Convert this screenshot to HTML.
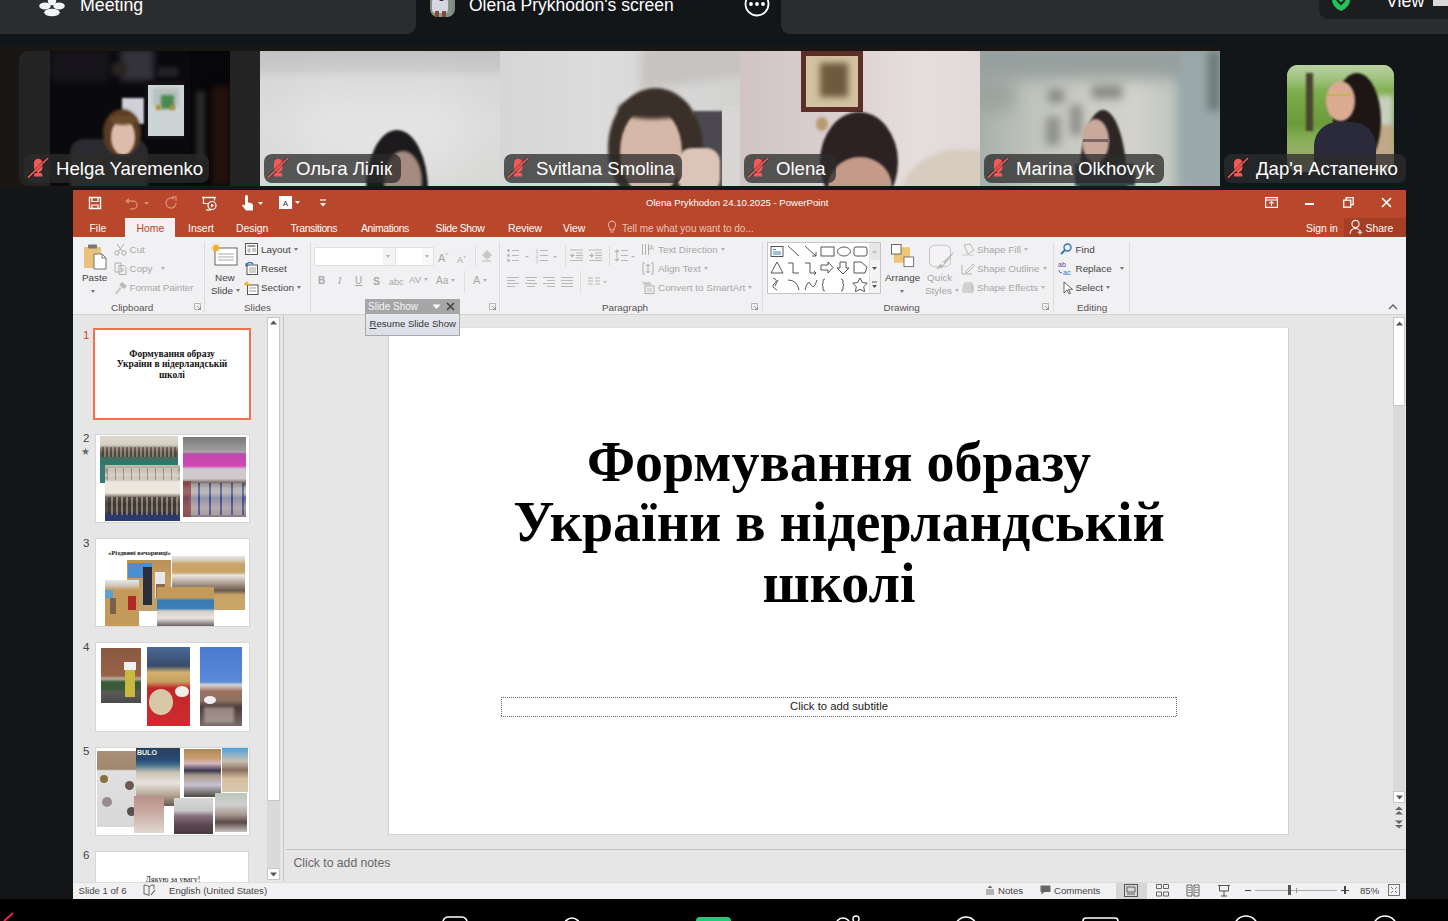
<!DOCTYPE html>
<html><head><meta charset="utf-8">
<style>
*{margin:0;padding:0;box-sizing:border-box}
html,body{width:1448px;height:921px;overflow:hidden;background:#131619;font-family:"Liberation Sans",sans-serif;position:relative}
.a{position:absolute}
.t{position:absolute;white-space:nowrap}
#topL{left:0;top:0;width:416px;height:34px;background:#2b2c2e;border-bottom-right-radius:9px}
#topR{left:781px;top:0;width:667px;height:34px;background:#2b2c2e;border-bottom-left-radius:9px}
.tile{position:absolute;top:51px;height:135px;overflow:hidden}
.lbl{position:absolute;top:154px;height:29px;border-radius:8px;background:rgba(43,43,43,.76);color:#fff;font-size:18.6px;line-height:29px}
.lbl span{position:absolute;left:32px;top:0}
.lbl svg{position:absolute;left:3px;top:3px}
.blob{position:absolute;border-radius:50%}
</style></head><body>
<div class="a" id="topL"></div>
<div class="a" id="topR"></div>
<!-- meeting icon -->
<svg class="a" style="left:39px;top:-4px" width="26" height="22" viewBox="0 0 26 22">
  <ellipse cx="13" cy="5" rx="4.2" ry="4.2" fill="#f4f5f7"/>
  <ellipse cx="6" cy="10" rx="5.8" ry="3.4" fill="#f4f5f7"/>
  <ellipse cx="20" cy="10" rx="5.8" ry="3.4" fill="#f4f5f7"/>
  <ellipse cx="13" cy="16.5" rx="7.8" ry="3.8" fill="#f4f5f7"/>
  
</svg>
<div class="t" style="left:80px;top:-5.5px;font-size:17.8px;color:#fff;line-height:21px">Meeting</div>
<!-- sharer avatar -->
<div class="a" style="left:430px;top:-8px;width:25px;height:25px;border-radius:8px;overflow:hidden;background:linear-gradient(90deg,#8a857e 0%,#9a9890 40%,#8a968c 70%,#7a8680 100%)">
  <div class="a" style="left:2px;top:6px;width:16px;height:15px;border-radius:4px;background:#d6d6e2;filter:blur(.4px)"></div>
  <div class="blob" style="left:7px;top:-3px;width:9px;height:12px;background:#241a16"></div>
  <div class="a" style="left:5px;top:19px;width:4px;height:6px;background:#7a5038"></div>
  <div class="a" style="left:12px;top:19px;width:4px;height:6px;background:#7a5038"></div>
</div>
<div class="t" style="left:469px;top:-5.5px;font-size:17.5px;color:#fff;line-height:21px">Olena Prykhodon's screen</div>
<!-- more circle -->
<svg class="a" style="left:744px;top:-9px" width="26" height="26" viewBox="0 0 26 26">
  <circle cx="13" cy="13" r="11.5" fill="none" stroke="#fff" stroke-width="1.8"/>
  <circle cx="7" cy="13" r="1.9" fill="#fff"/><circle cx="13" cy="13" r="1.9" fill="#fff"/><circle cx="19" cy="13" r="1.9" fill="#fff"/>
</svg>
<!-- right view panel -->
<div class="a" style="left:1319px;top:0;width:140px;height:19px;background:#1c1d1f;border-bottom-left-radius:9px"></div>
<svg class="a" style="left:1330px;top:-4px" width="22" height="16" viewBox="0 0 22 16">
  <path d="M2 0 L20 0 L20 4 Q20 11 11 15 Q2 11 2 4 Z" fill="#25c255"/>
  <path d="M7 4 L11 8 L15 4" stroke="#1c1d1f" stroke-width="2" fill="none"/>
</svg>
<div class="t" style="left:1386px;top:-9px;font-size:17.8px;color:#fff;line-height:21px">View</div>
<div class="a" style="left:1433px;top:0;width:15px;height:6px;background:#d8d8d8"></div>

<!-- strip -->
<div class="a" style="left:0;top:46px;width:1448px;height:142px;background:#1a1613"></div>
<div class="a" style="left:1220px;top:47px;width:228px;height:140px;background:#131619"></div>

<!-- tile1 Helga -->
<div class="tile" style="left:19px;width:241px;background:#232323;border-radius:9px 0 0 9px"></div>
<div class="tile" style="left:50px;width:180px;background:#0a090d">
  <div class="a" style="left:0;top:0;width:60px;height:30px;background:#18161c;filter:blur(4px)"></div>
  <div class="a" style="left:70px;top:-2px;width:34px;height:32px;background:#34323a;filter:blur(3px)"></div>
  <div class="a" style="left:62px;top:12px;width:14px;height:12px;background:#2a2420;filter:blur(2px)"></div>
  <div class="a" style="left:108px;top:16px;width:20px;height:10px;background:#242228;filter:blur(2px)"></div>
  <div class="a" style="left:72px;top:47px;width:22px;height:26px;background:#cfd0d8;filter:blur(1px)"></div>
  <div class="a" style="left:95px;top:30px;width:40px;height:58px;background:#141216;filter:blur(1px)"></div>
  <div class="a" style="left:98px;top:34px;width:36px;height:51px;background:#cdd4d4;filter:blur(.5px)"></div>
  <div class="a" style="left:103px;top:37px;width:26px;height:18px;background:#b8c0c0;filter:blur(1.5px)"></div>
  <div class="a" style="left:111px;top:44px;width:13px;height:14px;background:#4a8a50;filter:blur(1.5px)"></div>
  <div class="a" style="left:106px;top:54px;width:5px;height:5px;background:#b09040;filter:blur(1px)"></div>
  <div class="a" style="left:120px;top:54px;width:5px;height:5px;background:#b09040;filter:blur(1px)"></div>
  <div class="a" style="left:140px;top:0;width:40px;height:135px;background:#070608"></div>
  <div class="a" style="left:146px;top:40px;width:9px;height:70px;background:#2c2a2c;filter:blur(2.5px)"></div>
  <div class="a" style="left:162px;top:35px;width:18px;height:100px;background:#24120e;filter:blur(3px)"></div>
  <div class="a" style="left:20px;top:88px;width:78px;height:50px;border-radius:14px 14px 0 0;background:#2a2a30;filter:blur(1px)"></div>
  <div class="blob" style="left:53px;top:58px;width:38px;height:48px;background:#5a3c24;filter:blur(1.5px)"></div>
  <div class="blob" style="left:61px;top:68px;width:24px;height:36px;background:#dcbcaa;filter:blur(1px)"></div>
  <div class="a" style="left:60px;top:64px;width:26px;height:10px;border-radius:50%;background:#6a4a2c;filter:blur(1.5px)"></div>
</div>
<!-- tile2 Olga -->
<div class="tile" style="left:260px;width:240px;background:linear-gradient(180deg,#c2c2c4 0%,#cbcbcc 14%,#d8d8d8 20%,#dedddd 55%,#d8d8d6 100%)">
  <div class="a" style="left:40px;top:40px;width:160px;height:80px;background:#e4e3e3;filter:blur(20px)"></div>
  <div class="blob" style="left:106px;top:79px;width:62px;height:120px;background:#1c1a1c;filter:blur(1px)"></div>
  <div class="blob" style="left:124px;top:100px;width:38px;height:60px;background:#a68c80;filter:blur(1.5px)"></div>
</div>
<!-- tile3 Svitlana -->
<div class="tile" style="left:500px;width:240px;background:linear-gradient(90deg,#d6d6d6 0%,#dcdcdc 40%,#d8d8d8 70%,#d2d2d0 100%)">
  <div class="a" style="left:140px;top:-10px;width:110px;height:42px;background:#c6c4c2;filter:blur(5px);transform:skewY(-8deg)"></div>
  <div class="a" style="left:193px;top:60px;width:30px;height:80px;background:#4c4a50;filter:blur(1px)"></div>
  <div class="a" style="left:222px;top:55px;width:18px;height:80px;background:#d8d6d4"></div>
  <div class="blob" style="left:108px;top:37px;width:95px;height:120px;background:#3a3029;filter:blur(1.5px)"></div>
  <div class="blob" style="left:120px;top:56px;width:62px;height:90px;background:#d6b8a8;filter:blur(1px)"></div>
  <div class="a" style="left:118px;top:48px;width:70px;height:20px;border-radius:50%;background:#3a3029;filter:blur(2px)"></div>
  <div class="a" style="left:178px;top:97px;width:42px;height:45px;border-radius:14px;background:#dcc4b6;filter:blur(1px)"></div>
</div>
<!-- tile4 Olena -->
<div class="tile" style="left:740px;width:240px;background:linear-gradient(90deg,#d0c4c4 0%,#dbd0d0 40%,#e6dede 75%,#e2dad8 100%)">
  <div class="a" style="left:61px;top:0;width:62px;height:61px;background:#5c2e26"></div>
  <div class="a" style="left:66px;top:5px;width:52px;height:51px;background:#d2c2a2"></div>
  <div class="a" style="left:80px;top:12px;width:28px;height:34px;background:#6e5a3c;filter:blur(3px)"></div>
  <div class="blob" style="left:76px;top:66px;width:12px;height:14px;background:#b89a70;filter:blur(1.5px)"></div>
  <div class="blob" style="left:80px;top:61px;width:78px;height:100px;background:#2c2224;filter:blur(1px)"></div>
  <div class="blob" style="left:88px;top:106px;width:64px;height:60px;background:#c49a88;filter:blur(1px)"></div>
  <div class="blob" style="left:162px;top:98px;width:120px;height:90px;background:#d8ccc0;filter:blur(2px)"></div>
  </div>
<!-- tile5 Marina -->
<div class="tile" style="left:980px;width:240px;background:linear-gradient(90deg,#a8b0ac 0%,#bfc4bc 22%,#cccdc4 45%,#d2d2ca 65%,#c4c8c2 78%,#a8b4b4 84%,#9aa8a8 100%)">
  <div class="a" style="left:-10px;top:-10px;width:260px;height:38px;background:#96a09e;filter:blur(8px)"></div>
  <div class="a" style="left:-5px;top:30px;width:40px;height:30px;background:#8e9894;filter:blur(8px);opacity:.6"></div>
  <div class="a" style="left:68px;top:38px;width:16px;height:14px;background:#8a8c86;filter:blur(4px)"></div>
  <div class="a" style="left:112px;top:34px;width:30px;height:14px;background:#8a8c86;filter:blur(4px)"></div>
  <div class="a" style="left:66px;top:66px;width:14px;height:28px;background:#8e908a;filter:blur(4px)"></div>
  <div class="a" style="left:90px;top:54px;width:12px;height:30px;background:#8e908a;filter:blur(4px)"></div>
  <div class="a" style="left:200px;top:0;width:40px;height:135px;background:#9aa8aa;filter:blur(3px)"></div>
  <div class="a" style="left:228px;top:0;width:12px;height:60px;background:#6a7876;filter:blur(4px)"></div>
  <div class="blob" style="left:99px;top:59px;width:48px;height:150px;background:#2e2624;filter:blur(1px)"></div>
  <div class="blob" style="left:102px;top:68px;width:27px;height:44px;background:#caa89c;filter:blur(1px)"></div>
  <div class="a" style="left:103px;top:88px;width:25px;height:3px;background:#3a3034;opacity:.55"></div>
  <div class="a" style="left:95px;top:113px;width:60px;height:22px;background:#40404a;filter:blur(1px)"></div>
</div>
<!-- tile6 avatar -->
<div class="a" style="left:1287px;top:65px;width:107px;height:107px;border-radius:11px;overflow:hidden;background:linear-gradient(180deg,#98c078 0%,#7aaa48 30%,#6a9a3a 55%,#88b058 70%,#a8a880 100%)">
  <div class="a" style="left:0;top:0;width:107px;height:25px;background:linear-gradient(180deg,#b8d0a0,rgba(150,190,110,0))"></div>
  <div class="a" style="left:19px;top:8px;width:7px;height:58px;background:#4a4430;filter:blur(1px)"></div>
  <div class="a" style="left:88px;top:30px;width:19px;height:35px;background:#c8d0c0;filter:blur(3px)"></div>
  <div class="a" style="left:70px;top:60px;width:37px;height:47px;background:#c0a888;filter:blur(2px)"></div>
  <div class="blob" style="left:46px;top:8px;width:48px;height:95px;background:#1d1614;filter:blur(.8px)"></div>
  <div class="blob" style="left:39px;top:16px;width:29px;height:40px;background:#dcaa92;filter:blur(.8px)"></div>
  <div class="a" style="left:40px;top:29px;width:24px;height:2px;background:#b8b848;opacity:.8"></div>
  <div class="a" style="left:27px;top:57px;width:62px;height:55px;border-radius:24px 24px 0 0;background:#2a2a3a;filter:blur(.5px)"></div>
</div>

<!-- labels -->
<div class="lbl" style="left:24px;width:185px"><svg width="24" height="24" viewBox="0 0 24 24"><rect x="7" y="1.8" width="8.4" height="13.5" rx="4.2" fill="#f25a58"/><rect x="10.5" y="14" width="1.4" height="2" fill="#f25a58"/><path d="M7 19.6 v-1.6 q0-2 2-2 h4.4 q2 0 2 2 v1.6 z" fill="#f25a58"/><path d="M1 20.6 L21 1" stroke="rgba(0,0,0,0.35)" stroke-width="3.4"/><path d="M1 20.6 L21 1" stroke="#f25a58" stroke-width="1.7"/></svg><span>Helga Yaremenko</span></div>
<div class="lbl" style="left:264px;width:137px"><svg width="24" height="24" viewBox="0 0 24 24"><rect x="7" y="1.8" width="8.4" height="13.5" rx="4.2" fill="#f25a58"/><rect x="10.5" y="14" width="1.4" height="2" fill="#f25a58"/><path d="M7 19.6 v-1.6 q0-2 2-2 h4.4 q2 0 2 2 v1.6 z" fill="#f25a58"/><path d="M1 20.6 L21 1" stroke="rgba(0,0,0,0.35)" stroke-width="3.4"/><path d="M1 20.6 L21 1" stroke="#f25a58" stroke-width="1.7"/></svg><span>Ольга Лілік</span></div>
<div class="lbl" style="left:504px;width:178px"><svg width="24" height="24" viewBox="0 0 24 24"><rect x="7" y="1.8" width="8.4" height="13.5" rx="4.2" fill="#f25a58"/><rect x="10.5" y="14" width="1.4" height="2" fill="#f25a58"/><path d="M7 19.6 v-1.6 q0-2 2-2 h4.4 q2 0 2 2 v1.6 z" fill="#f25a58"/><path d="M1 20.6 L21 1" stroke="rgba(0,0,0,0.35)" stroke-width="3.4"/><path d="M1 20.6 L21 1" stroke="#f25a58" stroke-width="1.7"/></svg><span>Svitlana Smolina</span></div>
<div class="lbl" style="left:744px;width:92px"><svg width="24" height="24" viewBox="0 0 24 24"><rect x="7" y="1.8" width="8.4" height="13.5" rx="4.2" fill="#f25a58"/><rect x="10.5" y="14" width="1.4" height="2" fill="#f25a58"/><path d="M7 19.6 v-1.6 q0-2 2-2 h4.4 q2 0 2 2 v1.6 z" fill="#f25a58"/><path d="M1 20.6 L21 1" stroke="rgba(0,0,0,0.35)" stroke-width="3.4"/><path d="M1 20.6 L21 1" stroke="#f25a58" stroke-width="1.7"/></svg><span>Olena</span></div>
<div class="lbl" style="left:984px;width:180px"><svg width="24" height="24" viewBox="0 0 24 24"><rect x="7" y="1.8" width="8.4" height="13.5" rx="4.2" fill="#f25a58"/><rect x="10.5" y="14" width="1.4" height="2" fill="#f25a58"/><path d="M7 19.6 v-1.6 q0-2 2-2 h4.4 q2 0 2 2 v1.6 z" fill="#f25a58"/><path d="M1 20.6 L21 1" stroke="rgba(0,0,0,0.35)" stroke-width="3.4"/><path d="M1 20.6 L21 1" stroke="#f25a58" stroke-width="1.7"/></svg><span>Marina Olkhovyk</span></div>
<div class="lbl" style="left:1224px;width:182px"><svg width="24" height="24" viewBox="0 0 24 24"><rect x="7" y="1.8" width="8.4" height="13.5" rx="4.2" fill="#f25a58"/><rect x="10.5" y="14" width="1.4" height="2" fill="#f25a58"/><path d="M7 19.6 v-1.6 q0-2 2-2 h4.4 q2 0 2 2 v1.6 z" fill="#f25a58"/><path d="M1 20.6 L21 1" stroke="rgba(0,0,0,0.35)" stroke-width="3.4"/><path d="M1 20.6 L21 1" stroke="#f25a58" stroke-width="1.7"/></svg><span>Дар'я Астапенко</span></div>

<!-- PPT -->
<div class="a" style="left:73px;top:190px;width:1333px;height:709px;background:#e6e6e6"></div>
<div class="a" style="left:73px;top:190px;width:1333px;height:47px;background:#b8472b"></div>
<!-- QAT -->
<svg class="a" style="left:88px;top:196px" width="14" height="14" viewBox="0 0 14 14"><path d="M1.5 1.5 h11 v11 h-11 z" fill="none" stroke="#fff" stroke-width="1.4"/><path d="M4 1.5 v4 h6 v-4" fill="none" stroke="#fff" stroke-width="1.2"/><path d="M4 12.5 v-3.5 h6 v3.5" fill="none" stroke="#fff" stroke-width="1.2"/></svg>
<svg class="a" style="left:124px;top:196px" width="26" height="14" viewBox="0 0 26 14"><path d="M3 5 h6 a4 4 0 0 1 0 8 h-3" fill="none" stroke="#d98a74" stroke-width="1.4"/><path d="M1 5 l4 -3 v6 z" fill="#d98a74"/><path d="M20 6 l2.5 3 l2.5 -3 z" fill="#d98a74"/></svg>
<svg class="a" style="left:164px;top:196px" width="14" height="14" viewBox="0 0 14 14"><path d="M10 3 a5 5 0 1 0 2 4" fill="none" stroke="#d98a74" stroke-width="1.4"/><path d="M8 1 h4 v4" fill="none" stroke="#d98a74" stroke-width="1.3"/></svg>
<svg class="a" style="left:201px;top:196px" width="16" height="15" viewBox="0 0 16 15"><path d="M1 1.5 h14" stroke="#fff" stroke-width="1.4"/><path d="M2.5 1.5 v6 h5" fill="none" stroke="#fff" stroke-width="1.2"/><path d="M13.5 1.5 v3" stroke="#fff" stroke-width="1.2"/><circle cx="11" cy="9.5" r="4" fill="none" stroke="#fff" stroke-width="1.2"/><path d="M10 7.5 l3 2 l-3 2 z" fill="#fff"/><path d="M5 14 h5" stroke="#fff" stroke-width="1.2"/></svg>
<svg class="a" style="left:240px;top:195px" width="26" height="16" viewBox="0 0 26 16"><path d="M5 1.5 a1.5 1.5 0 0 1 3 0 v6 l3 0.5 q2 0.5 2 2.5 v5 h-7 l-4 -5 l1 -1 l2 1 z" fill="#fff"/><path d="M18 7 l2.5 3 l2.5 -3 z" fill="#fff"/></svg>
<svg class="a" style="left:278px;top:195px" width="26" height="15" viewBox="0 0 26 15"><rect x="1" y="1" width="13" height="13" fill="#fff"/><text x="7.5" y="10.5" font-size="8" font-family="Liberation Sans" text-anchor="middle" fill="#333">A</text><path d="M17 6 l2.5 3 l2.5 -3 z" fill="#fff"/></svg>
<svg class="a" style="left:318px;top:198px" width="10" height="10" viewBox="0 0 10 10"><path d="M2 2 h6" stroke="#fff" stroke-width="1.2"/><path d="M2 5 l3 3.5 l3 -3.5 z" fill="#fff"/></svg>
<div class="t" style="left:646px;top:197px;font-size:9.6px;line-height:12px;color:#fff">Olena Prykhodon 24.10.2025 - PowerPoint</div>
<!-- window controls -->
<svg class="a" style="left:1265px;top:197px" width="13" height="11" viewBox="0 0 13 11"><rect x="0.6" y="0.6" width="11.8" height="9.8" fill="none" stroke="#fff" stroke-width="1.2"/><path d="M0.6 3 h11.8" stroke="#fff" stroke-width="1.1"/><path d="M6.5 9 v-4.5 M4.5 6.5 l2 -2 l2 2" fill="none" stroke="#fff" stroke-width="1.1"/></svg>
<div class="a" style="left:1305px;top:203px;width:9px;height:2px;background:#fff"></div>
<svg class="a" style="left:1343px;top:197px" width="11" height="11" viewBox="0 0 11 11"><rect x="0.7" y="3.2" width="7" height="7" fill="none" stroke="#fff" stroke-width="1.3"/><path d="M3.2 3.2 v-2.5 h7 v7 h-2.5" fill="none" stroke="#fff" stroke-width="1.3"/></svg>
<svg class="a" style="left:1381px;top:197px" width="11" height="11" viewBox="0 0 11 11"><path d="M1 1 L10 10 M10 1 L1 10" stroke="#fff" stroke-width="1.6"/></svg>
<!-- tabs -->
<div class="a" style="left:125px;top:218px;width:50px;height:20px;background:#f1f0f2"></div>
<div class="t" style="left:89.5px;top:222.5px;font-size:10.4px;line-height:12px;color:#fff">File</div>
<div class="t" style="left:136.5px;top:222.5px;font-size:10.4px;line-height:12px;color:#c3401e">Home</div>
<div class="t" style="left:188px;top:222.5px;font-size:10.4px;line-height:12px;color:#fff">Insert</div>
<div class="t" style="left:236px;top:222.5px;font-size:10.4px;line-height:12px;color:#fff">Design</div>
<div class="t" style="left:290.5px;top:222.5px;font-size:10.4px;line-height:12px;color:#fff;letter-spacing:-0.35px">Transitions</div>
<div class="t" style="left:361px;top:222.5px;font-size:10.4px;line-height:12px;color:#fff;letter-spacing:-0.35px">Animations</div>
<div class="t" style="left:435.5px;top:222.5px;font-size:10.4px;line-height:12px;color:#fff;letter-spacing:-0.3px">Slide Show</div>
<div class="t" style="left:508px;top:222.5px;font-size:10.4px;line-height:12px;color:#fff">Review</div>
<div class="t" style="left:563px;top:222.5px;font-size:10.4px;line-height:12px;color:#fff">View</div>
<svg class="a" style="left:607px;top:220px" width="10" height="14" viewBox="0 0 10 14"><path d="M5 1 a3.8 3.8 0 0 0 -2.2 6.8 v2.2 h4.4 v-2.2 a3.8 3.8 0 0 0 -2.2 -6.8 z" fill="none" stroke="#e8c0b0" stroke-width="1"/><path d="M3.3 12 h3.4" stroke="#e8c0b0" stroke-width="1"/></svg>
<div class="t" style="left:622px;top:222.5px;font-size:10px;line-height:12px;color:#ecc2b4">Tell me what you want to do...</div>
<div class="t" style="left:1306px;top:222.5px;font-size:10.4px;line-height:12px;color:#fff">Sign in</div>
<div class="a" style="left:1344px;top:218px;width:62px;height:19px;background:#a43e25"></div>
<svg class="a" style="left:1349px;top:219px" width="15" height="16" viewBox="0 0 15 16"><circle cx="6.5" cy="5" r="3.6" fill="none" stroke="#fff" stroke-width="1.1"/><path d="M1 15 q0.5 -5.5 5.5 -5.5 q2.5 0 3.8 1.5" fill="none" stroke="#fff" stroke-width="1.1"/><path d="M11 11 v4.5 M8.8 13.2 h4.5" stroke="#fff" stroke-width="1.1"/></svg>
<div class="t" style="left:1365.5px;top:222.5px;font-size:10.4px;line-height:12px;color:#fff">Share</div>
<!-- ribbon -->
<div class="a" style="left:73px;top:237px;width:1333px;height:78px;background:#f1f0f2;border-bottom:1px solid #d2d2d2"></div>
<style>
.r{position:absolute;white-space:nowrap;font-size:9.9px;line-height:12px;color:#444}
.d{color:#a8a8a8}
.gl{position:absolute;white-space:nowrap;font-size:9.9px;line-height:12px;color:#555}
.sep{position:absolute;top:242px;width:1px;height:70px;background:#dcdcdc}
.dd{display:inline-block;width:0;height:0;border-left:2.5px solid transparent;border-right:2.5px solid transparent;border-top:3px solid #777;vertical-align:middle;margin-left:3px;position:relative;top:-1px}
.dd.g{border-top-color:#b4b4b4}
</style>
<!-- Clipboard -->
<svg class="a" style="left:83px;top:243px" width="25" height="27" viewBox="0 0 25 27"><rect x="1" y="4" width="17" height="21" rx="1" fill="#e8c27a"/><rect x="5" y="1.5" width="9" height="4" rx="1" fill="#777"/><path d="M11 11 h8 l4 4 v11 h-12 z" fill="#fff" stroke="#666" stroke-width="0.9"/><path d="M19 11 v4 h4" fill="none" stroke="#666" stroke-width="0.9"/></svg>
<div class="r" style="left:82px;top:272px">Paste</div>
<div class="dd" style="position:absolute;left:91px;top:290px;margin:0"></div>
<svg class="a" style="left:114px;top:243px" width="13" height="13" viewBox="0 0 13 13"><circle cx="3" cy="10" r="2.2" fill="none" stroke="#aaa" stroke-width="1"/><circle cx="10" cy="10" r="2.2" fill="none" stroke="#aaa" stroke-width="1"/><path d="M4.5 8.5 L10 1 M8.5 8.5 L3 1" stroke="#aaa" stroke-width="1"/></svg>
<div class="r d" style="left:129.5px;top:244px">Cut</div>
<svg class="a" style="left:114px;top:262px" width="13" height="13" viewBox="0 0 13 13"><path d="M1 1 h6 v9 h-6 z M5 3.5 h5 l2 2 v7 h-7 z" fill="#f1f0f2" stroke="#aaa" stroke-width="0.9"/><path d="M7 7 h3 M7 9 h3" stroke="#aaa" stroke-width="0.8"/></svg>
<div class="r d" style="left:129.5px;top:263.3px">Copy<span class="dd g" style="margin-left:8px"></span></div>
<svg class="a" style="left:114px;top:281px" width="14" height="14" viewBox="0 0 14 14"><path d="M8 1 l5 4 l-3 3 l-5 -4 z" fill="#b8b8b8"/><path d="M6 6 l-5 6 l1.5 1.5 l5 -6" fill="#c8c8c8"/></svg>
<div class="r d" style="left:129.5px;top:282.3px;letter-spacing:-0.1px">Format Painter</div>
<div class="gl" style="left:111px;top:301.5px">Clipboard</div>
<svg class="a" style="left:194px;top:303px" width="8" height="8" viewBox="0 0 8 8"><path d="M0.5 0.5 h6 v6 h-6 z" fill="none" stroke="#aaa" stroke-width="0.8"/><path d="M3 3 l3.5 3.5 M4 6.5 h2.5 v-2.5" fill="none" stroke="#888" stroke-width="0.8"/></svg>
<div class="sep" style="left:204px"></div>
<!-- Slides -->
<svg class="a" style="left:211px;top:243px" width="27" height="23" viewBox="0 0 27 23"><rect x="4" y="5" width="22" height="17" fill="#fff" stroke="#666" stroke-width="1"/><path d="M7 11 h16 M7 14 h16 M7 17 h16" stroke="#aaa" stroke-width="1"/><circle cx="5" cy="5" r="3" fill="#f0b030"/><path d="M5 0 v10 M0 5 h10 M1.5 1.5 l7 7 M8.5 1.5 l-7 7" stroke="#f0b030" stroke-width="0.8"/></svg>
<div class="r" style="left:215px;top:272px">New</div>
<div class="r" style="left:211px;top:285px">Slide<span class="dd"></span></div>
<svg class="a" style="left:245px;top:243px" width="13" height="12" viewBox="0 0 13 12"><rect x="0.5" y="0.5" width="12" height="11" fill="#fff" stroke="#555" stroke-width="1"/><path d="M2.5 3 h8" stroke="#555" stroke-width="1.2"/><path d="M2.5 5.5 h3 v4 h-3 z" fill="#bbb"/><path d="M7 6 h4 M7 8 h4" stroke="#777" stroke-width="0.8"/></svg>
<div class="r" style="left:261px;top:244px">Layout<span class="dd"></span></div>
<svg class="a" style="left:245px;top:262px" width="13" height="13" viewBox="0 0 13 13"><rect x="2" y="3" width="10.5" height="9.5" fill="#fff" stroke="#555" stroke-width="1"/><path d="M4 6 h7 M4 8 h7 M4 10 h7" stroke="#888" stroke-width="0.8"/><path d="M1 4 a4 4 0 0 1 7 -2" fill="none" stroke="#2b73c0" stroke-width="1.3"/><path d="M0 1 l1 4 l3 -1.5 z" fill="#2b73c0"/></svg>
<div class="r" style="left:261px;top:263.3px">Reset</div>
<svg class="a" style="left:244px;top:281px" width="15" height="14" viewBox="0 0 15 14"><rect x="3.5" y="4" width="10.5" height="9.5" fill="#fff" stroke="#555" stroke-width="1"/><path d="M5 7 h7 M5 10 h7" stroke="#888" stroke-width="0.8"/><path d="M0 3.5 h7" stroke="#f0b030" stroke-width="1.4"/><circle cx="2.5" cy="2" r="1.5" fill="#f0b030"/></svg>
<div class="r" style="left:261px;top:282.3px">Section<span class="dd"></span></div>
<div class="gl" style="left:244px;top:301.5px">Slides</div>
<div class="sep" style="left:310px"></div>
<!-- Font (disabled) -->
<div class="a" style="left:314px;top:247px;width:82px;height:19px;background:#fff;border:1px solid #e0e0e0"></div>
<div class="a" style="left:383px;top:248px;width:12px;height:17px;background:#f4f4f4"></div>
<div class="a" style="left:395px;top:247px;width:39px;height:19px;background:#fff;border:1px solid #e0e0e0"></div>
<div class="a" style="left:422px;top:248px;width:11px;height:17px;background:#f8f8f8"></div>
<div class="dd g" style="position:absolute;left:386px;top:255px;margin:0"></div>
<div class="dd g" style="position:absolute;left:425px;top:255px;margin:0"></div>
<div class="r d" style="left:438px;top:249px;font-size:11px">A<sup style="font-size:6px">^</sup></div>
<div class="r d" style="left:457px;top:251px;font-size:9px">A<sup style="font-size:6px">˅</sup></div>
<div class="sep" style="left:475px;top:246px;height:20px"></div>
<svg class="a" style="left:480px;top:249px" width="13" height="13" viewBox="0 0 13 13"><path d="M7 1 l5 5 l-5 5 l-5 -5 z" fill="#c8c8c8"/><path d="M2 12 h9" stroke="#bbb" stroke-width="1"/></svg>
<div class="r d" style="left:318px;top:275px;font-weight:bold;font-size:10px">B</div>
<div class="r d" style="left:338px;top:275px;font-style:italic;font-size:10px;font-family:'Liberation Serif'">I</div>
<div class="r d" style="left:355px;top:275px;text-decoration:underline;font-size:10px">U</div>
<div class="r d" style="left:373px;top:275px;font-size:10.5px;font-weight:bold">S</div>
<div class="r d" style="left:389px;top:276px;font-size:9px">abc</div>
<div class="r d" style="left:409px;top:274px;font-size:9.5px">AV<span class="dd g"></span></div>
<div class="sep" style="left:464px;top:271px;height:22px"></div>
<div class="r d" style="left:436px;top:275px;font-size:10px">Aa<span class="dd g"></span></div>
<div class="r d" style="left:473px;top:274px;font-size:11px">A<span class="dd g"></span></div>
<div class="sep" style="left:499px"></div>
<svg class="a" style="left:489px;top:303px" width="8" height="8" viewBox="0 0 8 8"><path d="M0.5 0.5 h6 v6 h-6 z" fill="none" stroke="#aaa" stroke-width="0.8"/><path d="M3 3 l3.5 3.5 M4 6.5 h2.5 v-2.5" fill="none" stroke="#888" stroke-width="0.8"/></svg>
<!-- Paragraph -->
<svg class="a" style="left:506px;top:248px" width="130" height="15" viewBox="0 0 130 15">
 <g fill="#b8b8b8" stroke="#b8b8b8" stroke-width="1.1">
  <circle cx="2.5" cy="2.5" r="1.4" stroke="none"/><circle cx="2.5" cy="7.5" r="1.4" stroke="none"/><circle cx="2.5" cy="12.5" r="1.4" stroke="none"/>
  <path d="M6 2.5 h7 M6 7.5 h7 M6 12.5 h7"/>
  <path d="M19 8 l2 2 l2 -2 z" stroke="none"/>
  <path d="M34 2.5 h8 M34 7.5 h8 M34 12.5 h8"/>
  <path d="M47 8 l2 2 l2 -2 z" stroke="none"/>
  <path d="M77 2 h-13 M77 12.5 h-13 M70 5 h7 M70 7.5 h7 M70 10 h7 M69 7.5 h-5"/>
  <path d="M64 7.5 l3 -2.5 v5 z" stroke="none"/>
  <path d="M83 2 h13 M83 12.5 h13 M89 5 h7 M89 7.5 h7 M89 10 h7"/>
  <path d="M83 7.5 h4"/><path d="M88 7.5 l-3 -2.5 v5 z" stroke="none"/>
  <path d="M111 2 v11 M109 4 l2 -2 l2 2 M109 11 l2 2 l2 -2 M115 2.5 h7 M115 7.5 h7 M115 12.5 h7"/>
  <path d="M125 8 l2 2 l2 -2 z" stroke="none"/>
 </g>
 <text x="29.5" y="5" font-size="5" fill="#b8b8b8" font-family="Liberation Sans">1</text>
 <text x="29.5" y="10" font-size="5" fill="#b8b8b8" font-family="Liberation Sans">2</text>
 <text x="29.5" y="15" font-size="5" fill="#b8b8b8" font-family="Liberation Sans">3</text>
</svg>
<div class="sep" style="left:565px;top:246px;height:20px"></div>
<div class="sep" style="left:609px;top:246px;height:20px"></div>
<svg class="a" style="left:506px;top:276px" width="105" height="12" viewBox="0 0 105 12">
 <g stroke="#b8b8b8" stroke-width="1.1">
  <path d="M1 1.5 h12 M1 4.5 h8 M1 7.5 h12 M1 10.5 h8"/>
  <path d="M19 1.5 h12 M21 4.5 h8 M19 7.5 h12 M21 10.5 h8"/>
  <path d="M37 1.5 h12 M41 4.5 h8 M37 7.5 h12 M41 10.5 h8"/>
  <path d="M55 1.5 h12 M55 4.5 h12 M55 7.5 h12 M55 10.5 h12"/>
  <path d="M82 2 h5 M82 5 h5 M82 8 h5 M89 2 h5 M89 5 h5 M89 8 h5"/>
 </g>
 <path d="M97 5 l2 2 l2 -2 z" fill="#b8b8b8"/>
</svg>
<div class="sep" style="left:580px;top:271px;height:22px"></div>
<svg class="a" style="left:641px;top:242px" width="13" height="14" viewBox="0 0 13 14"><path d="M1.5 2 v11 M4.5 2 v11 M7.5 2 v11" stroke="#b0b0b0" stroke-width="1"/><text x="8" y="8" font-size="7" fill="#b0b0b0" font-family="Liberation Sans">A</text></svg>
<div class="r d" style="left:658px;top:244px">Text Direction<span class="dd g"></span></div>
<svg class="a" style="left:642px;top:262px" width="12" height="13" viewBox="0 0 12 13"><path d="M3 1 h-2 v11 h2 M9 1 h2 v11 h-2" fill="none" stroke="#b0b0b0" stroke-width="1"/><path d="M6 2 v9 M4 4 l2 -2 l2 2 M4 9 l2 2 l2 -2" fill="none" stroke="#b0b0b0" stroke-width="1"/></svg>
<div class="r d" style="left:658px;top:263.3px">Align Text<span class="dd g"></span></div>
<svg class="a" style="left:641px;top:281px" width="14" height="13" viewBox="0 0 14 13"><path d="M1 1 h8 l2 3 h-8 z" fill="#c8c8c8"/><rect x="4" y="5" width="9" height="7.5" fill="none" stroke="#b0b0b0" stroke-width="1"/><path d="M6 8 h5 M6 10 h5" stroke="#b0b0b0" stroke-width="0.8"/></svg>
<div class="r d" style="left:658px;top:282.3px">Convert to SmartArt<span class="dd g"></span></div>
<div class="gl" style="left:602px;top:301.5px">Paragraph</div>
<svg class="a" style="left:751px;top:303px" width="8" height="8" viewBox="0 0 8 8"><path d="M0.5 0.5 h6 v6 h-6 z" fill="none" stroke="#aaa" stroke-width="0.8"/><path d="M3 3 l3.5 3.5 M4 6.5 h2.5 v-2.5" fill="none" stroke="#888" stroke-width="0.8"/></svg>
<div class="sep" style="left:762px"></div>
<!-- Drawing -->
<div class="a" style="left:767px;top:242px;width:114px;height:52px;background:#fff;border:1px solid #c6c6c6"></div>
<div class="a" style="left:869px;top:243px;width:11px;height:50px;background:#f4f4f4;border-left:1px solid #e0e0e0"></div>
<div class="a" style="left:869px;top:243px;width:11px;height:17px;background:#e6e6e6"></div>
<svg class="a" style="left:769px;top:244px" width="112" height="48" viewBox="0 0 112 48">
 <g fill="none" stroke="#444" stroke-width="0.9">
  <rect x="2" y="2.5" width="12" height="10"/><path d="M4 5.5 h3 M4 8 h8 M4 10 h8" stroke="#2b73c0"/>
  <path d="M19 2 L30 12"/>
  <path d="M36 2 L47 12 M43 12 h4 v-4"/>
  <rect x="52" y="3" width="13" height="9"/>
  <ellipse cx="75" cy="7.5" rx="6.5" ry="4.5"/>
  <rect x="85" y="3" width="13" height="9" rx="2"/>
  <path d="M2 29 L8 18 L14 29 Z"/>
  <path d="M19 19 h5 v10 h6"/>
  <path d="M36 19 h5 v10 h6 M45 27 l2 2 l-2 2"/>
  <path d="M52 21 h7 v-3 l5 5.5 l-5 5.5 v-3 h-7 z"/>
  <path d="M71 18 h6 v6 h3 l-6 6 l-6 -6 h3 z"/>
  <path d="M85 29 v-11 h7 l6 5 l-2 6 z"/>
  <path d="M4 34 q6 2 1 6 q-3 3 3 6 M9 36 l-3 6"/>
  <path d="M19 36 q9 0 11 10"/>
  <path d="M36 46 q3 -12 6 -5 q3 5 6 -5"/>
  <path d="M56 35 q-2 0 -2 2 v3 l-1 1 l1 1 v3 q0 2 2 2"/>
  <path d="M72 35 q2 0 2 2 v3 l1 1 l-1 1 v3 q0 2 -2 2"/>
  <path d="M91 34 l2.3 4.5 l5 0.7 l-3.6 3.5 l0.9 5 l-4.6 -2.4 l-4.6 2.4 l0.9 -5 l-3.6 -3.5 l5 -0.7 z"/>
 </g>
 <path d="M103 9 l2.5 -3 l2.5 3 z" fill="#bbb"/>
 <path d="M103 23 l2.5 3 l2.5 -3 z" fill="#555"/>
 <path d="M103 38 h5" stroke="#555" stroke-width="1"/><path d="M103 41 l2.5 3 l2.5 -3 z" fill="#555"/>
</svg>
<svg class="a" style="left:890px;top:243px" width="25" height="25" viewBox="0 0 25 25"><rect x="4" y="4.2" width="16" height="15.6" fill="#eec477"/><rect x="1.5" y="1.5" width="9.5" height="9.5" fill="#fff" stroke="#5a5a5a" stroke-width="0.9"/><rect x="14" y="14" width="9.6" height="9.6" fill="#fff" stroke="#6a6a6a" stroke-width="0.9"/></svg>
<div class="r" style="left:885px;top:272px">Arrange</div>
<div class="dd" style="position:absolute;left:900px;top:290px;margin:0"></div>
<svg class="a" style="left:928px;top:244px" width="28" height="26" viewBox="0 0 28 26"><rect x="1.5" y="1.2" width="21" height="21.5" rx="5" fill="#f4f2f4" stroke="#c4c4c4" stroke-width="1"/><path d="M26.5 7.5 L22 14 L18 19 L14 24 L8 25 L12 20 L17 16 L22 11 Z" fill="#bdbdbd"/><circle cx="14.5" cy="19.5" r="1.6" fill="#f4f2f4"/></svg>
<div class="r d" style="left:927px;top:272px">Quick</div>
<div class="r d" style="left:925px;top:285px">Styles<span class="dd g"></span></div>
<svg class="a" style="left:961px;top:242px" width="14" height="14" viewBox="0 0 14 14"><path d="M3 3 l6 -1 l4 6 l-6 4 z" fill="none" stroke="#b8b8b8" stroke-width="1"/><path d="M1 13 h12" stroke="#ddd" stroke-width="2"/></svg>
<div class="r d" style="left:977px;top:244px">Shape Fill<span class="dd g"></span></div>
<svg class="a" style="left:961px;top:262px" width="14" height="13" viewBox="0 0 14 13"><path d="M1 3 v9 h10" fill="none" stroke="#b8b8b8" stroke-width="1"/><path d="M5 9 l7 -7 l1.5 1.5 l-7 7 l-2 0.5 z" fill="none" stroke="#b8b8b8" stroke-width="1"/></svg>
<div class="r d" style="left:977px;top:263.3px">Shape Outline<span class="dd g"></span></div>
<svg class="a" style="left:961px;top:281px" width="14" height="13" viewBox="0 0 14 13"><path d="M2 3 h8 a3 3 0 0 1 3 3 v4 a2 2 0 0 1 -2 2 h-8 a2 2 0 0 1 -2 -2 z" fill="#d0d0d0"/><path d="M3 2 h8 v8" fill="none" stroke="#b8b8b8" stroke-width="1"/></svg>
<div class="r d" style="left:977px;top:282.3px">Shape Effects<span class="dd g"></span></div>
<div class="gl" style="left:883.5px;top:301.5px">Drawing</div>
<svg class="a" style="left:1042px;top:303px" width="8" height="8" viewBox="0 0 8 8"><path d="M0.5 0.5 h6 v6 h-6 z" fill="none" stroke="#aaa" stroke-width="0.8"/><path d="M3 3 l3.5 3.5 M4 6.5 h2.5 v-2.5" fill="none" stroke="#888" stroke-width="0.8"/></svg>
<div class="sep" style="left:1053px"></div>
<!-- Editing -->
<svg class="a" style="left:1060px;top:243px" width="12" height="12" viewBox="0 0 12 12"><circle cx="7.5" cy="4.5" r="3.5" fill="none" stroke="#2b73c0" stroke-width="1.4"/><path d="M5 7 L1 11" stroke="#2b73c0" stroke-width="1.8"/></svg>
<div class="r" style="left:1075.5px;top:244px">Find</div>
<svg class="a" style="left:1058px;top:261px" width="15" height="15" viewBox="0 0 15 15"><text x="0" y="6" font-size="7" fill="#7a3aa0" font-family="Liberation Sans">ab</text><text x="5" y="14" font-size="7" fill="#2b73c0" font-family="Liberation Sans">ac</text><path d="M1 9 q0 3 3 3" fill="none" stroke="#2b73c0" stroke-width="0.9"/></svg>
<div class="r" style="left:1075.5px;top:263.3px">Replace<span class="dd" style="margin-left:8px"></span></div>
<svg class="a" style="left:1063px;top:281px" width="10" height="14" viewBox="0 0 10 14"><path d="M1 1 v11 l3 -3 l2 4 l1.5 -0.7 l-2 -4 h4 z" fill="#fff" stroke="#555" stroke-width="0.9"/></svg>
<div class="r" style="left:1075.5px;top:282.3px">Select<span class="dd"></span></div>
<div class="gl" style="left:1077px;top:301.5px">Editing</div>
<div class="sep" style="left:1129px"></div>
<svg class="a" style="left:1388px;top:303px" width="10" height="7" viewBox="0 0 10 7"><path d="M1 6 L5 2 L9 6" fill="none" stroke="#666" stroke-width="1.4"/></svg>
<!-- thumbnails panel -->
<div class="a" style="left:283px;top:315px;width:1px;height:567px;background:#c8c8c8"></div>
<div class="a" style="left:267px;top:317px;width:13px;height:563px;background:#dadada"></div>
<div class="a" style="left:267px;top:317px;width:13px;height:12px;background:#fff;border:1px solid #c6c6c6"></div>
<svg class="a" style="left:270px;top:320px" width="7" height="5" viewBox="0 0 7 5"><path d="M0 4.5 L3.5 0.5 L7 4.5 z" fill="#555"/></svg>
<div class="a" style="left:267px;top:328px;width:13px;height:473px;background:#fff;border:1px solid #c6c6c6;border-top:none"></div>
<div class="a" style="left:267px;top:868px;width:13px;height:12px;background:#fff;border:1px solid #c6c6c6"></div>
<svg class="a" style="left:270px;top:872px" width="7" height="5" viewBox="0 0 7 5"><path d="M0 0.5 L3.5 4.5 L7 0.5 z" fill="#555"/></svg>
<div class="t" style="left:83px;top:329px;font-size:11.5px;line-height:13px;color:#d24726">1</div>
<div class="a" style="left:93px;top:328px;width:158px;height:92px;border:2.5px solid #f0714e;background:#fff"></div>
<div class="t" style="left:95px;top:349px;width:154px;text-align:center;font-family:'Liberation Serif';font-weight:bold;font-size:9.5px;line-height:10.4px;color:#111;white-space:normal">Формування образу<br>України в нідерландській<br>школі</div>
<div class="t" style="left:83px;top:432px;font-size:11.5px;line-height:13px;color:#444">2</div>
<div class="t" style="left:81px;top:446px;font-size:10px;line-height:12px;color:#666">★</div>
<div class="a" style="left:95px;top:434px;width:155px;height:89px;background:#fff;border:1px solid #d6d6d6;overflow:hidden">
  <div class="a" style="left:4px;top:1px;width:78px;height:29px;background:linear-gradient(180deg,#dcd8ce 0%,#d6d0c4 30%,#8a8070 45%,#5e5a50 62%,#4a6a60 78%,#2a7a6c 88%,#2a7a6c 100%)"></div>
  <div class="a" style="left:6px;top:12px;width:74px;height:10px;background:repeating-linear-gradient(90deg,#3a3430 0px,#3a3430 2px,#a89a88 2px,#a89a88 4px);opacity:.55;filter:blur(.4px)"></div>
  <div class="a" style="left:4px;top:30px;width:6px;height:18px;background:#3a7a76"></div>
  <div class="a" style="left:9px;top:30px;width:75px;height:56px;background:linear-gradient(180deg,#c4c0b4 0%,#9a968a 10%,#d4d0c4 18%,#a8a498 24%,#ece8e0 30%,#ebe7dc 50%,#70665c 58%,#4a4440 70%,#5a5048 80%,#2a3a6a 90%,#2a3a6a 100%)"></div>
  <div class="a" style="left:11px;top:33px;width:71px;height:12px;background:repeating-linear-gradient(90deg,#8a867a 0px,#8a867a 1px,#d8d4c8 1px,#d8d4c8 8px);opacity:.7"></div>
  <div class="a" style="left:12px;top:62px;width:70px;height:18px;background:repeating-linear-gradient(90deg,#2a2624 0px,#2a2624 3px,#c8b8a0 3px,#c8b8a0 5px);opacity:.45;filter:blur(.4px)"></div>
  <div class="a" style="left:87px;top:2px;width:63px;height:80px;background:linear-gradient(180deg,#7a7a7c 0%,#9c9c9c 16%,#a8a8a8 19%,#c048b0 21%,#d048b0 36%,#d0c8d0 40%,#cfcacc 52%,#6a5a5a 58%,#b8b8b8 64%,#c8c8c8 70%,#5a68a0 76%,#b0a0a8 88%,#8a7a80 100%)"></div>
  <div class="a" style="left:93px;top:48px;width:55px;height:32px;background:repeating-linear-gradient(90deg,#b8b0b0 0px,#b8b0b0 9px,#2a3a8a 9px,#2a3a8a 11px);opacity:.6"></div>
  <div class="a" style="left:87px;top:46px;width:8px;height:36px;background:#8a3a3a;opacity:.7"></div>
</div>
<div class="t" style="left:83px;top:537px;font-size:11.5px;line-height:13px;color:#444">3</div>
<div class="a" style="left:95px;top:538px;width:155px;height:89px;background:#fff;border:1px solid #d6d6d6;overflow:hidden">
  <div class="t" style="left:12px;top:10px;font-family:'Liberation Serif';font-weight:bold;font-size:6.6px;line-height:8px;color:#222">«Різдвяні вечорниці»</div>
  <div class="a" style="left:31px;top:21px;width:44px;height:51px;background:linear-gradient(180deg,#b8905a 0%,#c8a060 40%,#c0a070 100%)">
    <div class="a" style="left:1px;top:3px;width:24px;height:15px;background:#4a90d0"></div>
    <div class="a" style="left:16px;top:7px;width:9px;height:38px;background:#2a2e3a;filter:blur(.5px)"></div>
    <div class="a" style="left:28px;top:12px;width:10px;height:26px;background:#e8e8ec;filter:blur(.5px)"></div>
    <div class="a" style="left:29px;top:24px;width:9px;height:14px;background:#8a6a50"></div>
  </div>
  <div class="a" style="left:76px;top:17px;width:73px;height:54px;background:linear-gradient(180deg,#e8e8e8 0%,#d8d0c0 7%,#c8a468 15%,#c8a468 30%,#e8e4e0 36%,#b0a090 50%,#6a5a50 64%,#c8a468 72%,#c8a468 100%)"></div>
  <div class="a" style="left:9px;top:41px;width:34px;height:46px;background:linear-gradient(180deg,#e8e8e8 0%,#d0c8b8 12%,#c49a5a 22%,#c49a5a 100%)">
    <div class="a" style="left:0;top:10px;width:8px;height:8px;background:#5aa0d8"></div>
    <div class="a" style="left:23px;top:16px;width:8px;height:14px;background:#b02828"></div>
    <div class="a" style="left:5px;top:18px;width:6px;height:16px;background:#7a6048"></div>
  </div>
  <div class="a" style="left:61px;top:48px;width:57px;height:39px;background:linear-gradient(180deg,#c49a5a 0%,#c49a5a 28%,#3a7ab0 34%,#3a80b8 55%,#d8d0c8 62%,#e8e4e0 80%,#6a6060 100%)"></div>
</div>
<div class="t" style="left:83px;top:641px;font-size:11.5px;line-height:13px;color:#444">4</div>
<div class="a" style="left:95px;top:642px;width:155px;height:90px;background:#fff;border:1px solid #d6d6d6;overflow:hidden">
  <div class="a" style="left:4.5px;top:5px;width:40px;height:55px;background:linear-gradient(180deg,#8a5a40 0%,#966248 50%,#b8b0a0 56%,#3a5a38 62%,#3a5a38 74%,#5a5a58 80%,#4a4a4a 100%)">
    <div class="a" style="left:24px;top:17px;width:10px;height:32px;background:#c8b840;filter:blur(.6px)"></div>
    <div class="a" style="left:23px;top:14px;width:12px;height:8px;background:#f0f0f0"></div>
  </div>
  <div class="a" style="left:51px;top:4px;width:43px;height:79px;background:linear-gradient(180deg,#4a6a98 0%,#3a4a6a 24%,#d0b070 32%,#c8a060 44%,#c02828 52%,#d02a30 100%)">
    <div class="blob" style="left:2px;top:42px;width:24px;height:26px;background:#d8c8a8;filter:blur(.6px)"></div>
    <div class="blob" style="left:28px;top:39px;width:14px;height:11px;background:#f0eeea"></div>
  </div>
  <div class="a" style="left:104px;top:4px;width:42px;height:79px;background:linear-gradient(180deg,#4a7ad0 0%,#5a8ad8 44%,#d8d8d8 48%,#a07060 56%,#8a7060 68%,#4a3a38 76%,#7a6a68 100%)">
    <div class="blob" style="left:4px;top:49px;width:12px;height:8px;background:#f0f0f0"></div>
    <div class="a" style="left:4px;top:60px;width:30px;height:16px;background:#c8b8b0;filter:blur(1.5px);opacity:.6"></div>
  </div>
</div>
<div class="t" style="left:83px;top:745px;font-size:11.5px;line-height:13px;color:#444">5</div>
<div class="a" style="left:95px;top:747px;width:155px;height:89px;background:#fff;border:1px solid #d6d6d6;overflow:hidden">
  <div class="a" style="left:1px;top:3px;width:39px;height:76px;background:linear-gradient(180deg,#a89078 0%,#a08870 24%,#e0e0e0 26%,#d8d8d8 100%)">
    <div class="blob" style="left:5px;top:46px;width:10px;height:10px;background:#9a8a90"></div>
    <div class="blob" style="left:30px;top:56px;width:9px;height:9px;background:#5a5050"></div>
    <div class="blob" style="left:3px;top:24px;width:8px;height:8px;background:#8a7040"></div>
    <div class="blob" style="left:28px;top:30px;width:9px;height:9px;background:#6a5a50"></div>
  </div>
  <div class="a" style="left:40px;top:0;width:44px;height:58px;background:linear-gradient(180deg,#28405a 0%,#2a4a78 20%,#3a6a88 28%,#c8c0b0 42%,#e8e4dc 60%,#b8a898 80%,#6a5a50 100%)"></div>
  <div class="t" style="left:41px;top:1px;font-size:7px;font-weight:bold;color:#f0f0f0;line-height:8px">BULO</div>
  <div class="a" style="left:38px;top:48px;width:30px;height:37px;background:linear-gradient(180deg,#b89088 0%,#c8a8a0 40%,#e0d8d0 100%)"></div>
  <div class="a" style="left:88px;top:1px;width:37px;height:48px;background:linear-gradient(180deg,#b08858 0%,#c8a070 20%,#d8b8c0 30%,#3a3a50 45%,#a89888 55%,#c8c0d0 75%,#4a4840 100%)"></div>
  <div class="a" style="left:126px;top:0;width:26px;height:44px;background:linear-gradient(180deg,#50a0e0 0%,#c8c0b0 30%,#8a7060 50%,#d8c0a0 70%,#d8c8b0 100%)"></div>
  <div class="a" style="left:78px;top:50px;width:39px;height:36px;background:linear-gradient(180deg,#d8d8d8 0%,#c8c8c8 35%,#8a7080 50%,#5a4850 75%,#4a3a40 100%)"></div>
  <div class="a" style="left:119px;top:45px;width:32px;height:39px;background:linear-gradient(180deg,#b8c8b8 0%,#d0d0d0 30%,#a89890 55%,#5a4a48 75%,#c8c0c0 100%)"></div>
</div>
<div class="t" style="left:83px;top:849px;font-size:11.5px;line-height:13px;color:#444">6</div>
<div class="a" style="left:95px;top:851px;width:154px;height:31px;background:#fff;border:1px solid #d6d6d6;border-bottom:none;overflow:hidden">
  <div class="t" style="left:0;top:23px;width:154px;text-align:center;font-family:'Liberation Serif';font-size:8px;color:#222">Дякую за увагу!</div>
</div>
<!-- main slide area -->
<div class="a" style="left:388px;top:327px;width:901px;height:508px;background:#fff;border:1px solid #d0d0d0;border-top-color:#e0e0e0"></div>
<div class="t" style="left:389px;top:431.5px;width:900px;text-align:center;font-family:'Liberation Serif';font-weight:bold;font-size:56px;line-height:60.8px;color:#000;white-space:normal">Формування образу<br>України в нідерландській<br>школі</div>
<svg class="a" style="left:501px;top:697px" width="677" height="21" viewBox="0 0 677 21" shape-rendering="crispEdges"><path d="M0 0.5 H676 M0 19.5 H676 M0.5 0 V20 M675.5 0 V20" fill="none" stroke="#6a6a6a" stroke-width="1" stroke-dasharray="1 1"/></svg>
<div class="t" style="left:501px;top:699px;width:676px;text-align:center;font-size:11.3px;line-height:14px;color:#1a1a1a">Click to add subtitle</div>
<!-- main scrollbar -->
<div class="a" style="left:1393px;top:317px;width:12px;height:486px;background:#dadada"></div>
<div class="a" style="left:1393px;top:317px;width:12px;height:12px;background:#fff;border:1px solid #c6c6c6"></div>
<svg class="a" style="left:1395.5px;top:320.5px" width="7" height="5" viewBox="0 0 7 5"><path d="M0 4.5 L3.5 0.5 L7 4.5 z" fill="#555"/></svg>
<div class="a" style="left:1393px;top:328px;width:12px;height:78px;background:#fff;border:1px solid #c6c6c6;border-top:none"></div>
<div class="a" style="left:1393px;top:791px;width:12px;height:12px;background:#fff;border:1px solid #c6c6c6"></div>
<svg class="a" style="left:1395.5px;top:795px" width="7" height="5" viewBox="0 0 7 5"><path d="M0 0.5 L3.5 4.5 L7 0.5 z" fill="#555"/></svg>
<svg class="a" style="left:1395px;top:806px" width="8" height="9" viewBox="0 0 8 9"><path d="M0 4 L4 0.5 L8 4 z M0 8.5 L4 5 L8 8.5 z" fill="#666"/></svg>
<svg class="a" style="left:1395px;top:820px" width="8" height="9" viewBox="0 0 8 9"><path d="M0 0.5 L4 4 L8 0.5 z M0 5 L4 8.5 L8 5 z" fill="#666"/></svg>
<!-- notes -->
<div class="a" style="left:286px;top:849px;width:1120px;height:1px;background:#c0c0c0"></div>
<div class="t" style="left:293.5px;top:856px;font-size:12.2px;line-height:14px;color:#666">Click to add notes</div>
<!-- status bar -->
<div class="a" style="left:73px;top:882px;width:1333px;height:17px;background:#f1f0f2;border-top:1px solid #dcdcdc"></div>
<div class="t" style="left:78.5px;top:884.5px;font-size:9.6px;line-height:12px;color:#444">Slide 1 of 6</div>
<svg class="a" style="left:143px;top:884px" width="13" height="12" viewBox="0 0 13 12"><path d="M1 1 q3 0 5 1.5 v9 q-2 -1.5 -5 -1.5 z M6 2.5 q2 -1.5 5 -1.5 v4" fill="none" stroke="#555" stroke-width="0.9"/><path d="M8 11 l4 -5" stroke="#555" stroke-width="1.1"/></svg>
<div class="t" style="left:169px;top:884.5px;font-size:9.6px;line-height:12px;color:#444">English (United States)</div>
<svg class="a" style="left:985px;top:885px" width="10" height="10" viewBox="0 0 10 10"><path d="M5 0.5 l2.5 2.5 h-5 z" fill="#666"/><path d="M1 5 h8 M1 7 h8 M1 9 h8" stroke="#666" stroke-width="0.9"/></svg>
<div class="t" style="left:998px;top:884.5px;font-size:9.6px;line-height:12px;color:#444">Notes</div>
<svg class="a" style="left:1040px;top:885px" width="11" height="10" viewBox="0 0 11 10"><path d="M0.5 0.5 h10 v6.5 h-6 l-3 2.5 v-2.5 h-1 z" fill="#666"/></svg>
<div class="t" style="left:1054px;top:884.5px;font-size:9.6px;line-height:12px;color:#444">Comments</div>
<div class="a" style="left:1116px;top:883px;width:31px;height:16px;background:#d6d6d6"></div>
<svg class="a" style="left:1124px;top:884px" width="14" height="13" viewBox="0 0 14 13"><rect x="0.5" y="0.5" width="13" height="12" fill="none" stroke="#555" stroke-width="1"/><path d="M3 3 h8 v5 h-8 z" fill="none" stroke="#555" stroke-width="0.9"/><path d="M3 10 h8" stroke="#555" stroke-width="0.9"/></svg>
<svg class="a" style="left:1156px;top:884px" width="13" height="13" viewBox="0 0 13 13"><path d="M0.5 0.5 h5 v4 h-5 z M7.5 0.5 h5 v4 h-5 z M0.5 8 h5 v4 h-5 z M7.5 8 h5 v4 h-5 z" fill="none" stroke="#555" stroke-width="0.9"/></svg>
<svg class="a" style="left:1186px;top:884px" width="14" height="13" viewBox="0 0 14 13"><path d="M1 1 h5 v11 h-5 z M8 1 h5 v11 h-5 z" fill="none" stroke="#555" stroke-width="0.9"/><path d="M2 3.5 h3 M2 6 h3 M2 8.5 h3 M9 3.5 h3 M9 6 h3 M9 8.5 h3" stroke="#555" stroke-width="0.7"/></svg>
<svg class="a" style="left:1217px;top:884px" width="14" height="13" viewBox="0 0 14 13"><path d="M1 1.5 h12 M2.5 1.5 v5.5 h9 v-5.5 M7 7 v5 M4 12 h6" fill="none" stroke="#555" stroke-width="1"/></svg>
<div class="a" style="left:1245px;top:889.5px;width:6px;height:1.5px;background:#444"></div>
<div class="a" style="left:1255px;top:890px;width:82px;height:1px;background:#aaa"></div>
<div class="a" style="left:1288px;top:885px;width:3px;height:10px;background:#555"></div>
<div class="a" style="left:1296px;top:888px;width:1px;height:5px;background:#999"></div>
<div class="a" style="left:1341px;top:889.5px;width:8px;height:1.5px;background:#444"></div>
<div class="a" style="left:1344.25px;top:886.25px;width:1.5px;height:8px;background:#444"></div>
<div class="t" style="left:1360px;top:884.5px;font-size:9.6px;line-height:12px;color:#444">85%</div>
<svg class="a" style="left:1388px;top:884px" width="12" height="12" viewBox="0 0 12 12"><rect x="0.5" y="0.5" width="11" height="11" fill="none" stroke="#666" stroke-width="0.9"/><path d="M3 3 l2 2 M9 3 l-2 2 M3 9 l2 -2 M9 9 l-2 -2" stroke="#666" stroke-width="0.9"/></svg>
<!-- slideshow popup -->
<div class="a" style="left:365px;top:299px;width:95px;height:37px;background:linear-gradient(180deg,#eceef4,#dcdfe8);border:1px solid #a8a8a8"></div>
<div class="a" style="left:366px;top:300px;width:93px;height:14px;background:#a6a6a8"></div>
<div class="t" style="left:368px;top:301px;font-size:10px;line-height:12px;color:#f4f4f4">Slide Show</div>
<svg class="a" style="left:432px;top:304px" width="9" height="6" viewBox="0 0 9 6"><path d="M0.5 0.5 L4.5 5 L8.5 0.5 z" fill="#fff"/></svg>
<svg class="a" style="left:446px;top:302px" width="9" height="9" viewBox="0 0 9 9"><path d="M1 1 L8 8 M8 1 L1 8" stroke="#444" stroke-width="1.6"/></svg>
<div class="t" style="left:369.5px;top:317.5px;font-size:9.6px;line-height:12px;color:#333"><u>R</u>esume Slide Show</div>
<!-- right margin black -->
<div class="a" style="left:1406px;top:189px;width:42px;height:710px;background:#131619"></div>
<!-- bottom black -->
<div class="a" style="left:0;top:899px;width:1448px;height:22px;background:#000"></div>
<svg class="a" style="left:0;top:899px" width="1448" height="22" viewBox="0 0 1448 22">
 <path d="M4 22 L13 14" stroke="#e8204f" stroke-width="2.2"/>
 <rect x="443" y="18" width="24" height="12" rx="5" fill="none" stroke="#fff" stroke-width="1.6"/>
 <circle cx="572" cy="27" r="8" fill="none" stroke="#fff" stroke-width="1.6"/>
 <rect x="696" y="18" width="35" height="10" rx="4" fill="#22c977"/>
 <circle cx="843" cy="26" r="7" fill="none" stroke="#fff" stroke-width="1.6"/><circle cx="856" cy="20" r="3" fill="none" stroke="#fff" stroke-width="1.4"/>
 <circle cx="966" cy="29" r="11" fill="none" stroke="#fff" stroke-width="1.6"/>
 <rect x="1083" y="19" width="35" height="10" rx="3" fill="none" stroke="#fff" stroke-width="1.6"/>
 <circle cx="1246" cy="29" r="12" fill="none" stroke="#fff" stroke-width="1.6"/>
 <circle cx="1385" cy="29" r="12" fill="none" stroke="#fff" stroke-width="1.6"/>
</svg>
</body></html>
